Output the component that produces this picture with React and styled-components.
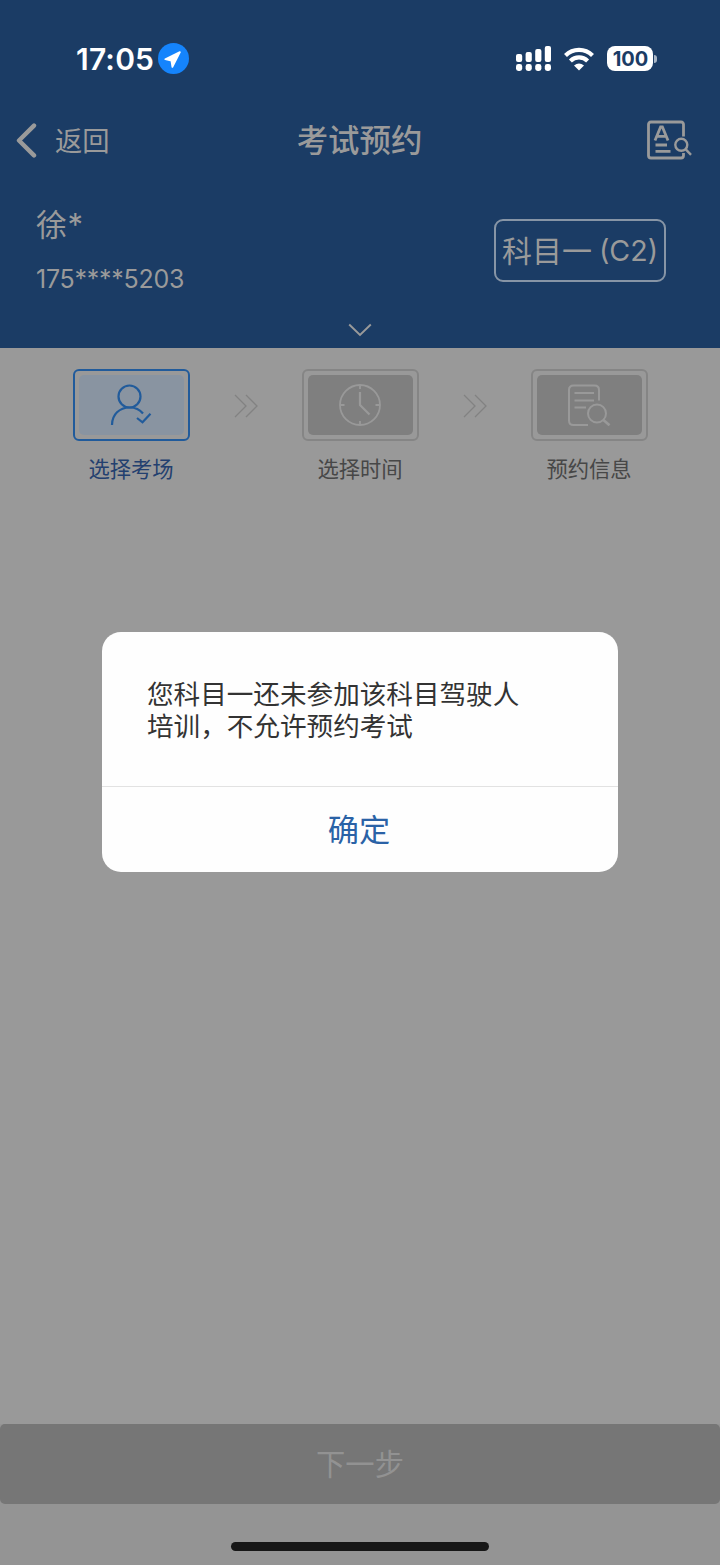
import React from "react";
import styled, { createGlobalStyle } from "styled-components";

const GlobalStyle = createGlobalStyle`
  * {
    box-sizing: border-box;
  }

  body {
    margin: 0;
    background-color: #999999;
    font-family: Inter, "Noto Sans CJK SC", sans-serif;
  }

  button {
    padding: 0;
    border: none;
    background: none;
    font-family: inherit;
  }

  svg {
    display: block;
    flex-shrink: 0;
  }
`;

const Page = styled.div`
  position: relative;
  display: flex;
  flex-direction: column;
  width: 720px;
  height: 1565px;
  background-color: #999999;
  overflow: hidden;
`;

const Header = styled.header`
  height: 348px;
  background-color: #1b3c65;
  color: #9a9a9a;
`;

const StatusBar = styled.div`
  display: flex;
  align-items: center;
  height: 104px;
  padding: 13px 63px 0 76px;
  color: #ffffff;

  .time {
    width: 82px;
    font-size: 30px;
    font-weight: 600;
    letter-spacing: 0.2px;
    line-height: 36px;
  }

  .signal {
    margin-left: auto;
  }

  .wifi {
    margin-left: 13px;
  }
`;

const Battery = styled.div`
  display: flex;
  align-items: center;
  margin-left: 13px;

  span {
    width: 46px;
    height: 25px;
    padding-left: 1px;
    border-radius: 8px;
    background-color: #ffffff;
    color: #1b3c65;
    font-size: 20px;
    font-weight: 700;
    line-height: 26px;
    text-align: center;
  }

  i {
    width: 3px;
    height: 8px;
    margin-left: 1px;
    border-radius: 0 4px 4px 0;
    background-color: #a9b6c6;
  }
`;

const NavBar = styled.nav`
  display: grid;
  grid-template-columns: 200px 1fr 200px;
  align-items: center;
  height: 72px;
  padding: 0 28px 0 16px;

  h1 {
    margin: 0 0 0 11px;
    padding-top: 2px;
    font-size: 31.4px;
    font-weight: 500;
    line-height: 40px;
    text-align: center;
  }
`;

const BackButton = styled.button`
  display: flex;
  align-items: center;
  gap: 18px;
  color: #9a9a9a;
  font-size: 27.3px;
  line-height: 40px;

  span {
    padding-top: 4px;
  }
`;

const SearchButton = styled.button`
  justify-self: end;
  padding-bottom: 1px;
  color: #9a9a9a;
`;

const UserPanel = styled.section`
  display: flex;
  justify-content: space-between;
  height: 134px;
  padding: 27px 54px 0 36px;
`;

const UserName = styled.div`
  font-size: 31px;
  line-height: 44px;
  letter-spacing: 0.6px;
`;

const Phone = styled.div`
  margin-top: 14px;
  font-size: 25px;
  line-height: 36px;
  letter-spacing: -0.25px;
`;

const SubjectTag = styled.div`
  display: flex;
  justify-content: center;
  gap: 7px;
  width: 172px;
  height: 63px;
  margin-top: 16px;
  border: 2px solid #8795a6;
  border-radius: 9px;
  font-size: 30px;
  line-height: 60px;
  white-space: nowrap;

  span:last-child {
    font-size: 28.6px;
  }
`;

const ExpandButton = styled.button`
  display: flex;
  justify-content: center;
  width: 100%;
  padding-top: 13px;
  color: #9a9a9a;
`;

const Steps = styled.section`
  display: flex;
  justify-content: center;
  padding-top: 21px;
`;

const Step = styled.div`
  display: flex;
  flex-direction: column;
  align-items: center;
  width: 117px;
  color: ${({ $active }) => ($active ? "#23406f" : "#474747")};
  font-size: 21.3px;
  line-height: 32px;

  p {
    margin: 12px 0 0;
  }
`;

const StepBox = styled.div`
  width: 117px;
  height: 72px;
  padding: 4px;
  border: 2px solid ${({ $active }) => ($active ? "#215b9b" : "#858585")};
  border-radius: 6px;

  div {
    display: flex;
    align-items: center;
    justify-content: center;
    height: 60px;
    border-radius: 5px;
    background-color: ${({ $active }) => ($active ? "#8994a1" : "#7f7f7f")};
    color: ${({ $active }) => ($active ? "#215b9b" : "#999999")};
  }
`;

const StepArrow = styled.div`
  display: flex;
  justify-content: center;
  width: 112px;
  padding-top: 25px;
  color: #828282;
`;

const Footer = styled.footer`
  display: flex;
  flex-direction: column;
  align-items: center;
  height: 141px;
  margin-top: auto;
  background-color: #949494;
`;

const NextButton = styled.button`
  width: 100%;
  height: 80px;
  border-radius: 5px;
  background-color: #767676;
  color: #929292;
  font-size: 29.3px;
  line-height: 81px;
`;

const HomeIndicator = styled.div`
  width: 258px;
  height: 9px;
  margin-top: 38px;
  border-radius: 5px;
  background-color: #171717;
`;

const Overlay = styled.div`
  position: absolute;
  inset: 0;
  padding: 632px 102px 0;
`;

const Dialog = styled.div`
  width: 516px;
  height: 240px;
  border-radius: 19px;
  background-color: #fefefe;

  p {
    height: 155px;
    margin: 0;
    padding: 46px 96px 0 45px;
    border-bottom: 1px solid #e2e2e2;
    color: #333333;
    font-size: 26.6px;
    line-height: 32px;
    white-space: nowrap;
  }
`;

const ConfirmButton = styled.button`
  width: 100%;
  height: 85px;
  padding-right: 2px;
  color: #2a62a6;
  font-size: 31.2px;
  line-height: 87px;
`;

const LocationIcon = () => (
  <svg width="31" height="31" viewBox="0 0 31 31">
    <circle cx="15.5" cy="15.5" r="15.5" fill="#1584fc" />
    <path
      d="M21.9 9.1 14.4 23.9 13.4 17.6 7.3 16.2z"
      fill="#fff"
      stroke="#fff"
      strokeWidth="1.8"
      strokeLinejoin="round"
    />
  </svg>
);

const SignalIcon = () => (
  <svg className="signal" width="35" height="26" viewBox="0 0 35 26" fill="#fff">
    <rect x="0" y="8" width="6.2" height="8" rx="2" />
    <rect x="9.6" y="6" width="6.2" height="10" rx="2" />
    <rect x="19.2" y="3" width="6.2" height="13" rx="2" />
    <rect x="28.8" y="0" width="6.2" height="16" rx="2" />
    <rect x="0" y="18" width="6.2" height="7" rx="2.4" />
    <rect x="9.6" y="18" width="6.2" height="7" rx="2.4" />
    <rect x="19.2" y="18" width="6.2" height="7" rx="2.4" />
    <rect x="28.8" y="18" width="6.2" height="7" rx="2.4" />
  </svg>
);

const WifiIcon = () => (
  <svg className="wifi" width="30" height="24" viewBox="0 0 30 24" fill="none" stroke="#fff" strokeWidth="4.2">
    <path d="M1.5 8.4A19.3 19.3 0 0 1 28.5 8.4" />
    <path d="M6.4 13.9A12.300 12.300 0 0 1 23.600 13.9" />
    <path d="M10 18.4Q15 14.4 20 18.4L15 23.400z" fill="#fff" stroke="none" />
  </svg>
);

const BackIcon = () => (
  <svg width="21" height="35" viewBox="0 0 21 35" fill="none" stroke="currentColor" strokeWidth="4.4" strokeLinecap="round" strokeLinejoin="round">
    <path d="M18 2.6 3 17.5 18 32.4" />
  </svg>
);

const ArchiveSearchIcon = () => (
  <svg width="46" height="40" viewBox="0 0 46 40" fill="none" stroke="currentColor" strokeWidth="2.8">
    <path d="M37.5 16.5V4.5Q37.5 2 35 2H5Q2.5 2 2.5 4.5V35.5Q2.5 38 5 38H35Q37.5 38 37.5 35.5V33" />
    <path d="M9 20.5 14.6 7H16.4L22 20.5M11 16.3H20" />
    <path d="M9.5 25H21M9.5 31.3H24.5" />
    <circle cx="35.3" cy="24.8" r="6" strokeWidth="2.4" />
    <path d="M39.8 29.400 45 34.800" strokeWidth="2.4" />
  </svg>
);

const ChevronIcon = () => (
  <svg width="24" height="14" viewBox="0 0 24 14" fill="none" stroke="currentColor" strokeWidth="1.9">
    <path d="M1.2 1.5 12 12 22.8 1.5" />
  </svg>
);

const PersonIcon = () => (
  <svg width="42" height="42" viewBox="0 0 42 42" fill="none" stroke="currentColor" strokeWidth="2.2">
    <circle cx="19.5" cy="12.5" r="11" />
    <path d="M2 41C2 30.5 9.5 23.5 19.5 23.5C25 23.5 30 25.7 33 29.5" />
    <path d="M27 34 32.5 38.3 40.5 29.8" />
  </svg>
);

const ClockIcon = () => (
  <svg width="42" height="42" viewBox="0 0 42 42" fill="none" stroke="currentColor" strokeWidth="1.8">
    <circle cx="21" cy="21" r="20" />
    <path d="M21 8V21L30.5 30.5" strokeWidth="2.2" />
    <path d="M21 1V5M21 37V41M1 21H5.5M36.5 21H41" />
  </svg>
);

const DocumentSearchIcon = () => (
  <svg width="44" height="42" viewBox="0 0 44 42" fill="none" stroke="currentColor" strokeWidth="2">
    <path d="M32 16.500V6Q32 1.500 27.500 1.500H6.500Q2 1.500 2 6V36.500Q2 41 6.500 41H21" />
    <path d="M7.500 9H27M7.500 16.500H27M7.500 23.500H19" />
    <circle cx="30" cy="29.500" r="9" />
    <path d="M36.500 36 42.500 41.300" strokeWidth="2.600" />
  </svg>
);

const DoubleArrowIcon = () => (
  <svg width="24" height="24" viewBox="0 0 24 24" fill="none" stroke="currentColor" strokeWidth="1.3">
    <path d="M1 1 12 12 1 23" />
    <path d="M12 1 23 12 12 23" />
  </svg>
);

const steps = [
  { label: "选择考场", icon: <PersonIcon />, active: true },
  { label: "选择时间", icon: <ClockIcon /> },
  { label: "预约信息", icon: <DocumentSearchIcon /> },
];

const App = () => {
  return (
    <Page>
      <GlobalStyle />
      <Header>
        <StatusBar>
          <span className="time">17:05</span>
          <LocationIcon />
          <SignalIcon />
          <WifiIcon />
          <Battery>
            <span>100</span>
            <i />
          </Battery>
        </StatusBar>
        <NavBar>
          <BackButton>
            <BackIcon />
            <span>返回</span>
          </BackButton>
          <h1>考试预约</h1>
          <SearchButton aria-label="查询">
            <ArchiveSearchIcon />
          </SearchButton>
        </NavBar>
        <UserPanel>
          <div>
            <UserName>徐*</UserName>
            <Phone>175****5203</Phone>
          </div>
          <SubjectTag>
            <span>科目一</span>
            <span>(C2)</span>
          </SubjectTag>
        </UserPanel>
        <ExpandButton aria-label="展开">
          <ChevronIcon />
        </ExpandButton>
      </Header>

      <Steps>
        {steps.map((step, index) => (
          <React.Fragment key={step.label}>
            {index > 0 && (
              <StepArrow>
                <DoubleArrowIcon />
              </StepArrow>
            )}
            <Step $active={step.active}>
              <StepBox $active={step.active}>
                <div>{step.icon}</div>
              </StepBox>
              <p>{step.label}</p>
            </Step>
          </React.Fragment>
        ))}
      </Steps>

      <Footer>
        <NextButton>下一步</NextButton>
        <HomeIndicator />
      </Footer>

      <Overlay>
        <Dialog>
          <p>
            您科目一还未参加该科目驾驶人
            <br />
            培训，不允许预约考试
          </p>
          <ConfirmButton>确定</ConfirmButton>
        </Dialog>
      </Overlay>
    </Page>
  );
};

export default App;
